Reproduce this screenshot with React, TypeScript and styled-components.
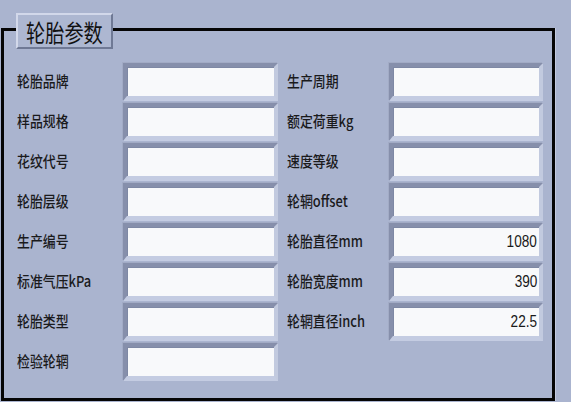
import React from "react";
import styled, { createGlobalStyle } from "styled-components";

const GlobalStyle = createGlobalStyle`
  html, body {
    margin: 0;
    padding: 0;
    background: #aab4cf;
  }
  body {
    font-family: "Noto Sans CJK SC", "Liberation Sans", sans-serif;
    color: #1c1c1e;
  }
`;

const Page = styled.div`
  width: 571px;
  height: 402px;
  overflow: hidden;
  box-sizing: border-box;
  padding: 28px 0 0 1px;
  background: #aab4cf;
`;

const Frame = styled.div`
  position: relative;
  width: 554px;
  height: 373px;
  box-sizing: border-box;
  border: 3px solid #050505;
  box-shadow: 1px 0 0 #c3cadf;
  padding: 32px 0 0 13px;
`;

const Title = styled.div`
  position: absolute;
  left: 12px;
  top: -18px;
  width: 97px;
  height: 36px;
  box-sizing: border-box;
  background: #adb7d1;
  border: 2px solid;
  border-color: #d2d8ea #6f7995 #6f7995 #d2d8ea;
  display: flex;
  align-items: center;
  padding-left: 8px;
`;

const TitleText = styled.span`
  display: inline-block;
  font-size: 24px;
  line-height: 1;
  color: #111;
  transform: scaleX(0.8);
  transform-origin: left center;
  white-space: nowrap;
  margin-top: 2px;
`;

const Columns = styled.div`
  display: flex;
  gap: 9px;
`;

const Column = styled.div`
  display: flex;
  flex-direction: column;
  gap: 2px;
`;

const Row = styled.div`
  display: flex;
  align-items: center;
  height: 38px;
`;

const Label = styled.div<{ $w: number }>`
  width: ${(p) => p.$w}px;
  flex: none;
  font-size: 15px;
  font-weight: 500;
  line-height: 1;
  white-space: nowrap;
  transform: scaleX(0.86);
  transform-origin: left center;
  margin-top: -3px;
  color: #1a1a1c;
`;

const Field = styled.div<{ $w: number }>`
  width: ${(p) => p.$w}px;
  height: 38px;
  flex: none;
  box-sizing: border-box;
  border-style: solid;
  border-width: 4px 4px 5px 4px;
  border-color: #868fab #c2cadf #c4cce2 #868fab;
  box-shadow: inset 1px 1px 0 #7e88a4, -1px -1px 0 #a2abc5;
  background: #f8f9fb;
  display: flex;
  align-items: center;
  justify-content: flex-end;
  padding-right: 2px;
`;

const Value = styled.span`
  display: inline-block;
  font-family: "Liberation Sans", sans-serif;
  font-size: 17px;
  line-height: 1;
  color: #1a1a1a;
  transform: scaleX(0.8);
  transform-origin: right center;
`;

type Item = { label: string; value?: string };

const left: Item[] = [
  { label: "轮胎品牌" },
  { label: "样品规格" },
  { label: "花纹代号" },
  { label: "轮胎层级" },
  { label: "生产编号" },
  { label: "标准气压kPa" },
  { label: "轮胎类型" },
  { label: "检验轮辋" },
];

const right: Item[] = [
  { label: "生产周期" },
  { label: "额定荷重kg" },
  { label: "速度等级" },
  { label: "轮辋offset" },
  { label: "轮胎直径mm", value: "1080" },
  { label: "轮胎宽度mm", value: "390" },
  { label: "轮辋直径inch", value: "22.5" },
];

function renderColumn(items: Item[], labelW: number, fieldW: number) {
  return (
    <Column>
      {items.map((it) => (
        <Row key={it.label}>
          <Label $w={labelW}>{it.label}</Label>
          <Field $w={fieldW}>{it.value ? <Value>{it.value}</Value> : null}</Field>
        </Row>
      ))}
    </Column>
  );
}

export default function App() {
  return (
    <>
      <GlobalStyle />
      <Page>
        <Frame>
          <Title>
            <TitleText>轮胎参数</TitleText>
          </Title>
          <Columns>
            {renderColumn(left, 106, 155)}
            {renderColumn(right, 102, 154)}
          </Columns>
        </Frame>
      </Page>
    </>
  );
}
